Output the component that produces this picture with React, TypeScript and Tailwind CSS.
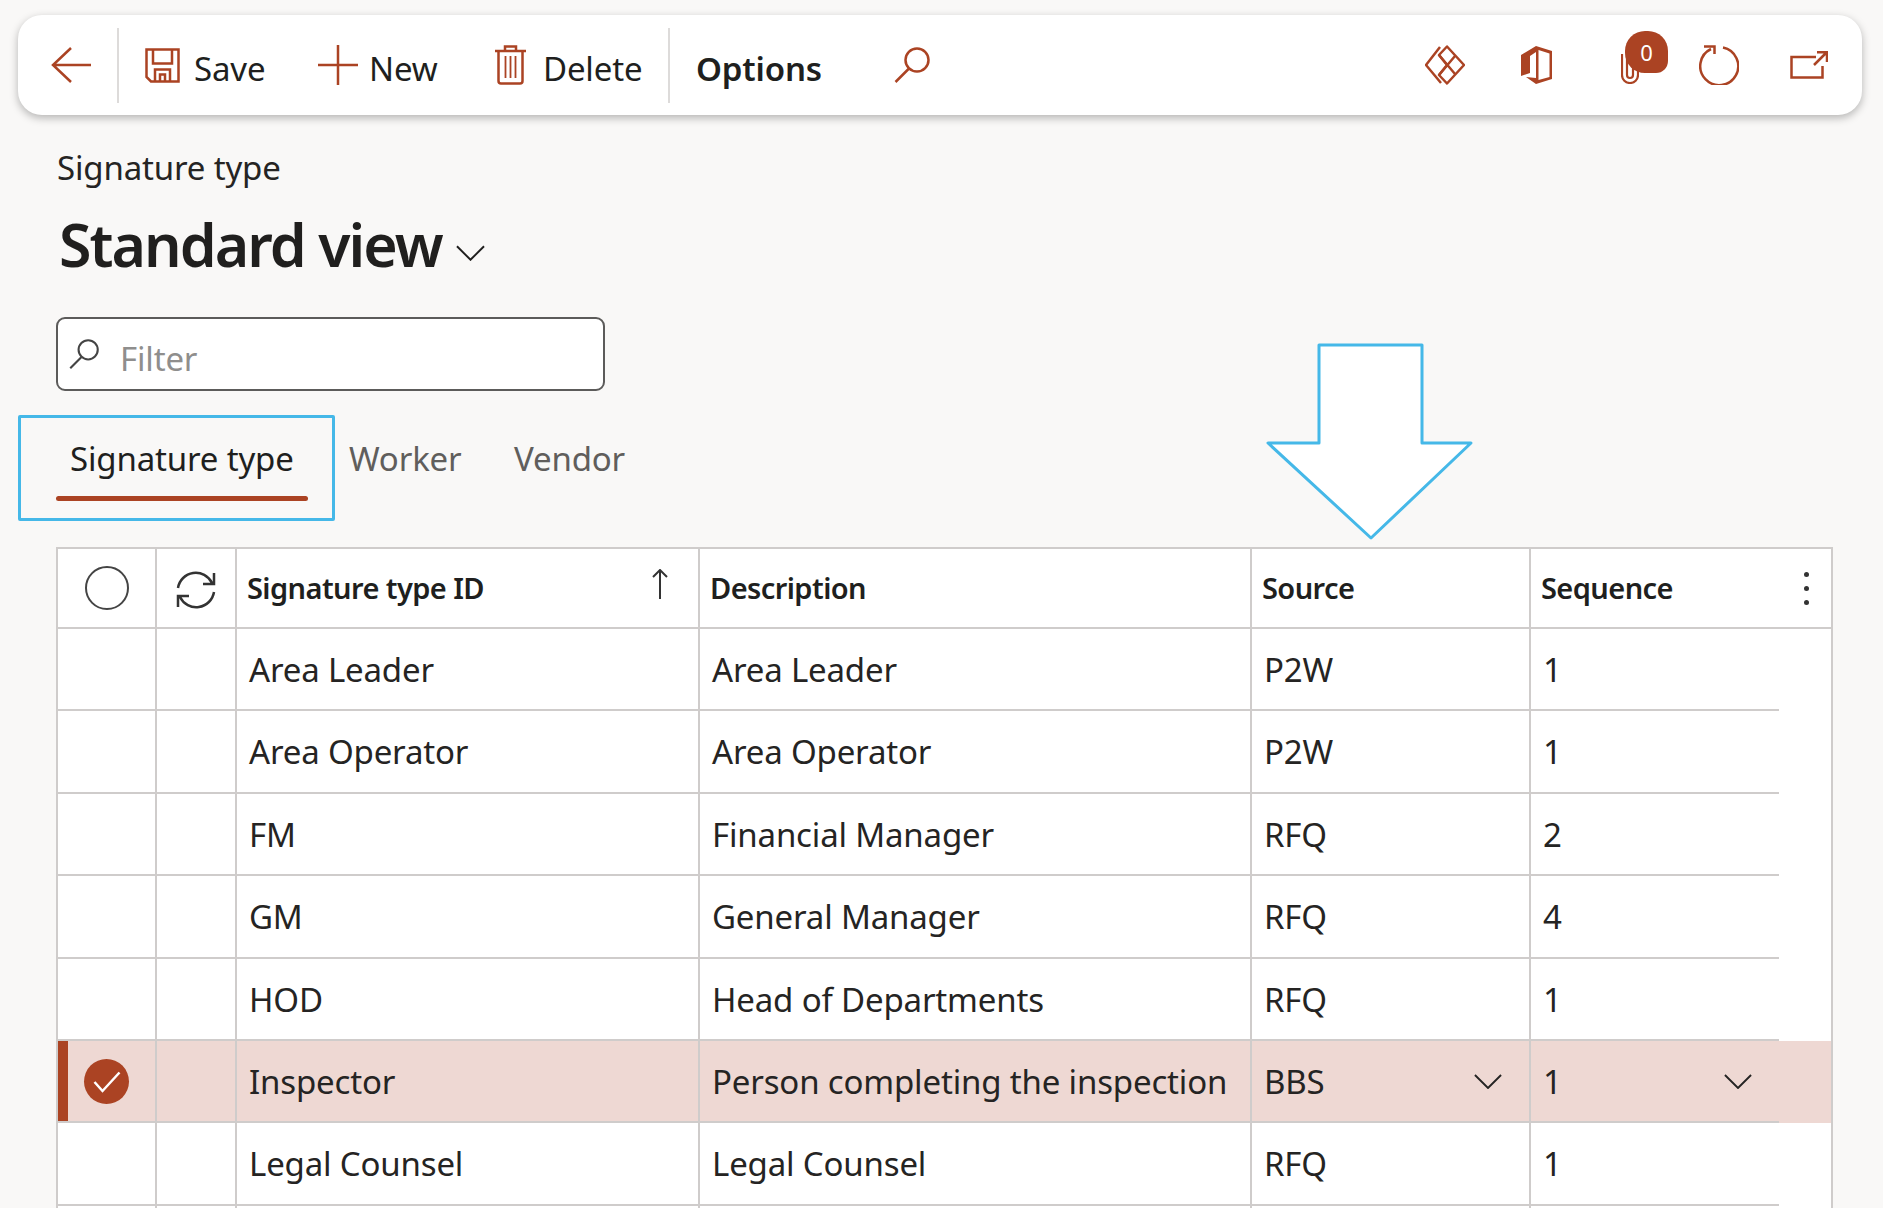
const rows = [
  { id: "Area Leader", desc: "Area Leader", source: "P2W", seq: "1" },
  { id: "Area Operator", desc: "Area Operator", source: "P2W", seq: "1" },
  { id: "FM", desc: "Financial Manager", source: "RFQ", seq: "2" },
  { id: "GM", desc: "General Manager", source: "RFQ", seq: "4" },
  { id: "HOD", desc: "Head of Departments", source: "RFQ", seq: "1" },
  { id: "Inspector", desc: "Person completing the inspection", source: "BBS", seq: "1", selected: true },
  { id: "Legal Counsel", desc: "Legal Counsel", source: "RFQ", seq: "1" },
  { id: "", desc: "", source: "", seq: "" },
];

const cols = "grid grid-cols-[99px_80px_463px_552px_279px_248px_52px]";
const line = "flex items-center border-b-2 border-[#cfcccb]";
const cell = line + " px-[12px] pt-[1px] text-[33px] tracking-[-0.005em] text-[#252423]";
const headCell = line + " px-[10px] text-[29px] font-semibold tracking-[-0.02em] text-[#201f1e]";
const toolText = "whitespace-nowrap pt-[7px] text-[33px] tracking-[-0.005em] text-[#201f1e]";

const Chevron = ({ className }: { className: string }) => (
  <svg viewBox="0 0 30 16" className={className} fill="none" stroke="currentColor" strokeWidth="2">
    <path d="M1 1l14 14L29 1" />
  </svg>
);

const SearchIcon = ({ className }: { className: string }) => (
  <svg viewBox="0 0 36 36" className={className} fill="none" stroke="currentColor" strokeWidth="2.5">
    <circle cx="23" cy="13" r="11.5" />
    <path d="M15 21.5L1.5 35" />
  </svg>
);

const Toolbar = () => (
  <div className="mx-[18px] mt-[15px] flex h-[100px] w-[1844px] items-center rounded-[24px] bg-white text-[#ab4323] shadow-[0_3px_9px_rgba(0,0,0,0.28)]">
    <svg viewBox="0 0 40 36" className="ml-[33px] h-[36px] w-[40px]" fill="none" stroke="currentColor" strokeWidth="2.5">
      <path d="M20 1L2 18l18 17M2 18h38" />
    </svg>
    <div className="ml-[26px] h-[75px] w-[2px] bg-[#dddbda]" />
    <svg viewBox="0 0 35 35" className="ml-[26px] h-[35px] w-[35px]" fill="none" stroke="currentColor" strokeWidth="2.5">
      <path d="M1.500 1.500h32v32H6l-4.500-4.500z" />
      <path d="M8 1.500v14h19v-14M10 33.500v-12h15v12M15 33.500v-7h5v7" />
    </svg>
    <span className={"ml-[14px] w-[70px] " + toolText}>Save</span>
    <svg viewBox="0 0 40 40" className="ml-[54px] h-[40px] w-[40px]" fill="none" stroke="currentColor" strokeWidth="2.5">
      <path d="M20 0v40M0 20h40" />
    </svg>
    <span className={"ml-[11px] w-[70px] " + toolText}>New</span>
    <svg viewBox="0 0 31 40" className="ml-[56px] h-[40px] w-[31px]" fill="none" stroke="currentColor" strokeWidth="2.5">
      <path d="M0 6h31M10 6V1.500h11V6M3.500 6v30a2.500 2.500 0 0 0 2.500 2.500h19a2.500 2.500 0 0 0 2.500-2.500V6" />
      <path d="M10.500 11v22M15.500 11v22M20.500 11v22" strokeWidth="1.8" />
    </svg>
    <span className={"ml-[17px] w-[99px] " + toolText}>Delete</span>
    <div className="ml-[26px] h-[75px] w-[2px] bg-[#dddbda]" />
    <span className={"ml-[26px] w-[126px] font-semibold " + toolText}>Options</span>
    <SearchIcon className="ml-[72px] h-[36px] w-[36px]" />

    <div className="ml-auto flex items-center">
      <svg viewBox="0 0 40 40" className="h-[40px] w-[40px]" fill="none" stroke="currentColor" strokeWidth="2.5" strokeLinejoin="round">
        <path d="M22 1.500L39 20 22 38.500 14 30 22 20l-8-10z" />
        <path d="M15 2L1 20l15 18M14 10l16 19M30 11L14 30" />
      </svg>
      <svg viewBox="0 0 31 38" className="ml-[56px] h-[38px] w-[31px]" fill="currentColor" fillRule="evenodd">
        <path d="M0 9L15 0l16 5v28l-16 5-10-7 10 1V6l-6 4v17l-9 3zM17.500 4v30l11-3V7.500z" />
      </svg>
      <div className="relative ml-[69px] h-[38px] w-[18px]">
        <svg viewBox="0 0 18 38" className="h-[38px] w-[18px]" fill="none" stroke="currentColor" strokeWidth="2.2">
          <path d="M1 8v21a8 8 0 0 0 16 0V15M6 8v21a3 3 0 0 0 6 0V15" />
        </svg>
        <div className="absolute left-[4px] top-[-15px] flex h-[42px] w-[43px] items-center justify-center rounded-[20px] rounded-br-[12px] bg-[#ab4323] text-[22px] text-white">
          0
        </div>
      </div>
      <svg viewBox="0 0 40 40" className="ml-[60px] h-[40px] w-[40px]" fill="none" stroke="currentColor" strokeWidth="2.5">
        <path d="M24 2.500A19 19 0 1 1 12 4M5 1.500h10.500V9" />
      </svg>
      <svg viewBox="0 0 38 28" className="ml-[51px] mr-[34px] h-[28px] w-[38px]" fill="none" stroke="currentColor" strokeWidth="2.5">
        <path d="M26 6H1.500v20.500h31V15M24 14L37 1M27 1.200h10V11" />
      </svg>
    </div>
  </div>
);

export default function App() {
  return (
    <div className="relative h-[1208px] w-[1883px] overflow-hidden bg-[#f9f8f7] font-['Noto_Sans',sans-serif]">
      <Toolbar />

      <div className="pl-[56px] pt-[33px]">
        <p className="ml-[1px] text-[33px] leading-[40px] tracking-[-0.005em] text-[#252423]">Signature type</p>
        <div className="mt-[21px] flex h-[70px] items-center">
          <h1 className="ml-[3px] text-[59px] font-semibold tracking-[-0.033em] text-[#201f1e]">Standard view</h1>
          <Chevron className="ml-[14px] mt-[18px] h-[16px] w-[29px] text-[#201f1e]" />
        </div>

        <div className="mt-[38px] flex h-[74px] w-[549px] items-center rounded-[9px] border-2 border-[#5c5b5a] bg-white pl-[11px]">
          <SearchIcon className="h-[30px] w-[30px] text-[#444]" />
          <span className="ml-[21px] pt-[9px] text-[33px] tracking-[-0.005em] text-[#8f8e8d]">Filter</span>
        </div>

        <div className="mt-[33px] flex h-[96px] items-start">
          <div className="w-[252px]">
            <p className="h-[72px] pl-[14px] pt-[13px] text-[33px] leading-[44px] tracking-[-0.005em] text-[#201f1e]">Signature type</p>
            <div className="h-[5px] rounded-full bg-[#ab4323]" />
          </div>
          <p className="ml-[41px] w-[111px] pt-[13px] text-[33px] leading-[44px] tracking-[-0.005em] text-[#605e5c]">Worker</p>
          <p className="ml-[54px] pt-[13px] text-[33px] leading-[44px] tracking-[-0.005em] text-[#605e5c]">Vendor</p>
        </div>

        <div className="mt-[27px] w-[1777px] border-x-2 border-t-2 border-[#cfcccb] bg-white">
          <div className={`${cols} h-[80px]`}>
            <div className={headCell + " justify-center border-r-2"}>
              <div className="h-[44px] w-[44px] rounded-full border-2 border-[#444]" />
            </div>
            <div className={headCell + " justify-center border-r-2"}>
              <svg viewBox="0 0 40 40" className="mt-[3px] h-[40px] w-[40px] text-[#333]" fill="none" stroke="currentColor" strokeWidth="2.500">
                <path d="M2 18A18 18 0 0 1 36 13M38 3v11H27M38 22A18 18 0 0 1 4 27M2 37V26h11" />
              </svg>
            </div>
            <div className={headCell + " justify-between border-r-2"}>
              <span>Signature type ID</span>
              <svg viewBox="0 0 16 30" className="mr-[20px] mt-[-8px] h-[30px] w-[16px] text-[#333]" fill="none" stroke="currentColor" strokeWidth="2">
                <path d="M8 30V1M1 8l7-7 7 7" />
              </svg>
            </div>
            <div className={headCell + " border-r-2"}>Description</div>
            <div className={headCell + " border-r-2"}>Source</div>
            <div className={headCell}>Sequence</div>
            <div className="flex items-center justify-center border-b-2 border-[#cfcccb]">
              <div className="flex flex-col gap-[9px] pl-[3px]">
                <div className="h-[5px] w-[5px] rounded-full bg-[#333]" />
                <div className="h-[5px] w-[5px] rounded-full bg-[#333]" />
                <div className="h-[5px] w-[5px] rounded-full bg-[#333]" />
              </div>
            </div>
          </div>

          {rows.map((r, i) => (
            <div key={i} className={`${cols} h-[82.4px] ${r.selected ? "bg-[#eed8d3]" : ""}`}>
              <div className={cell + " relative justify-center border-r-2"}>
                {r.selected && (
                  <>
                    <div className="absolute inset-y-0 left-0 w-[10px] bg-[#ab4323]" />
                    <div className="flex h-[45px] w-[45px] items-center justify-center rounded-full bg-[#ab4323]">
                      <svg viewBox="0 0 28 22" className="h-[22px] w-[28px] text-white" fill="none" stroke="currentColor" strokeWidth="2.500">
                        <path d="M1.500 11l8 9L26.500 1.500" />
                      </svg>
                    </div>
                  </>
                )}
              </div>
              <div className={cell + " border-r-2"} />
              <div className={cell + " border-r-2"}>{r.id}</div>
              <div className={cell + " border-r-2"}>{r.desc}</div>
              <div className={cell + " justify-between border-r-2"}>
                {r.source}
                {r.selected && <Chevron className="mr-[15px] h-[15px] w-[28px]" />}
              </div>
              <div className={cell + " justify-between"}>
                {r.seq}
                {r.selected && <Chevron className="mr-[15px] h-[15px] w-[28px]" />}
              </div>
              <div />
            </div>
          ))}
        </div>
      </div>

      {/* blue annotation marks drawn over the page */}
      <div className="absolute left-[18px] top-[415px] h-[106px] w-[317px] rounded-[2px] border-[3px] border-[#45b8e8]" />
      <svg viewBox="0 0 207 198" className="absolute left-[1266px] top-[343px] h-[198px] w-[207px]" fill="none">
        <path d="M53 2h103v98h49L105 195 2 100h51z" fill="#fff" stroke="#45b8e8" strokeWidth="3" strokeLinejoin="round" />
      </svg>
    </div>
  );
}
